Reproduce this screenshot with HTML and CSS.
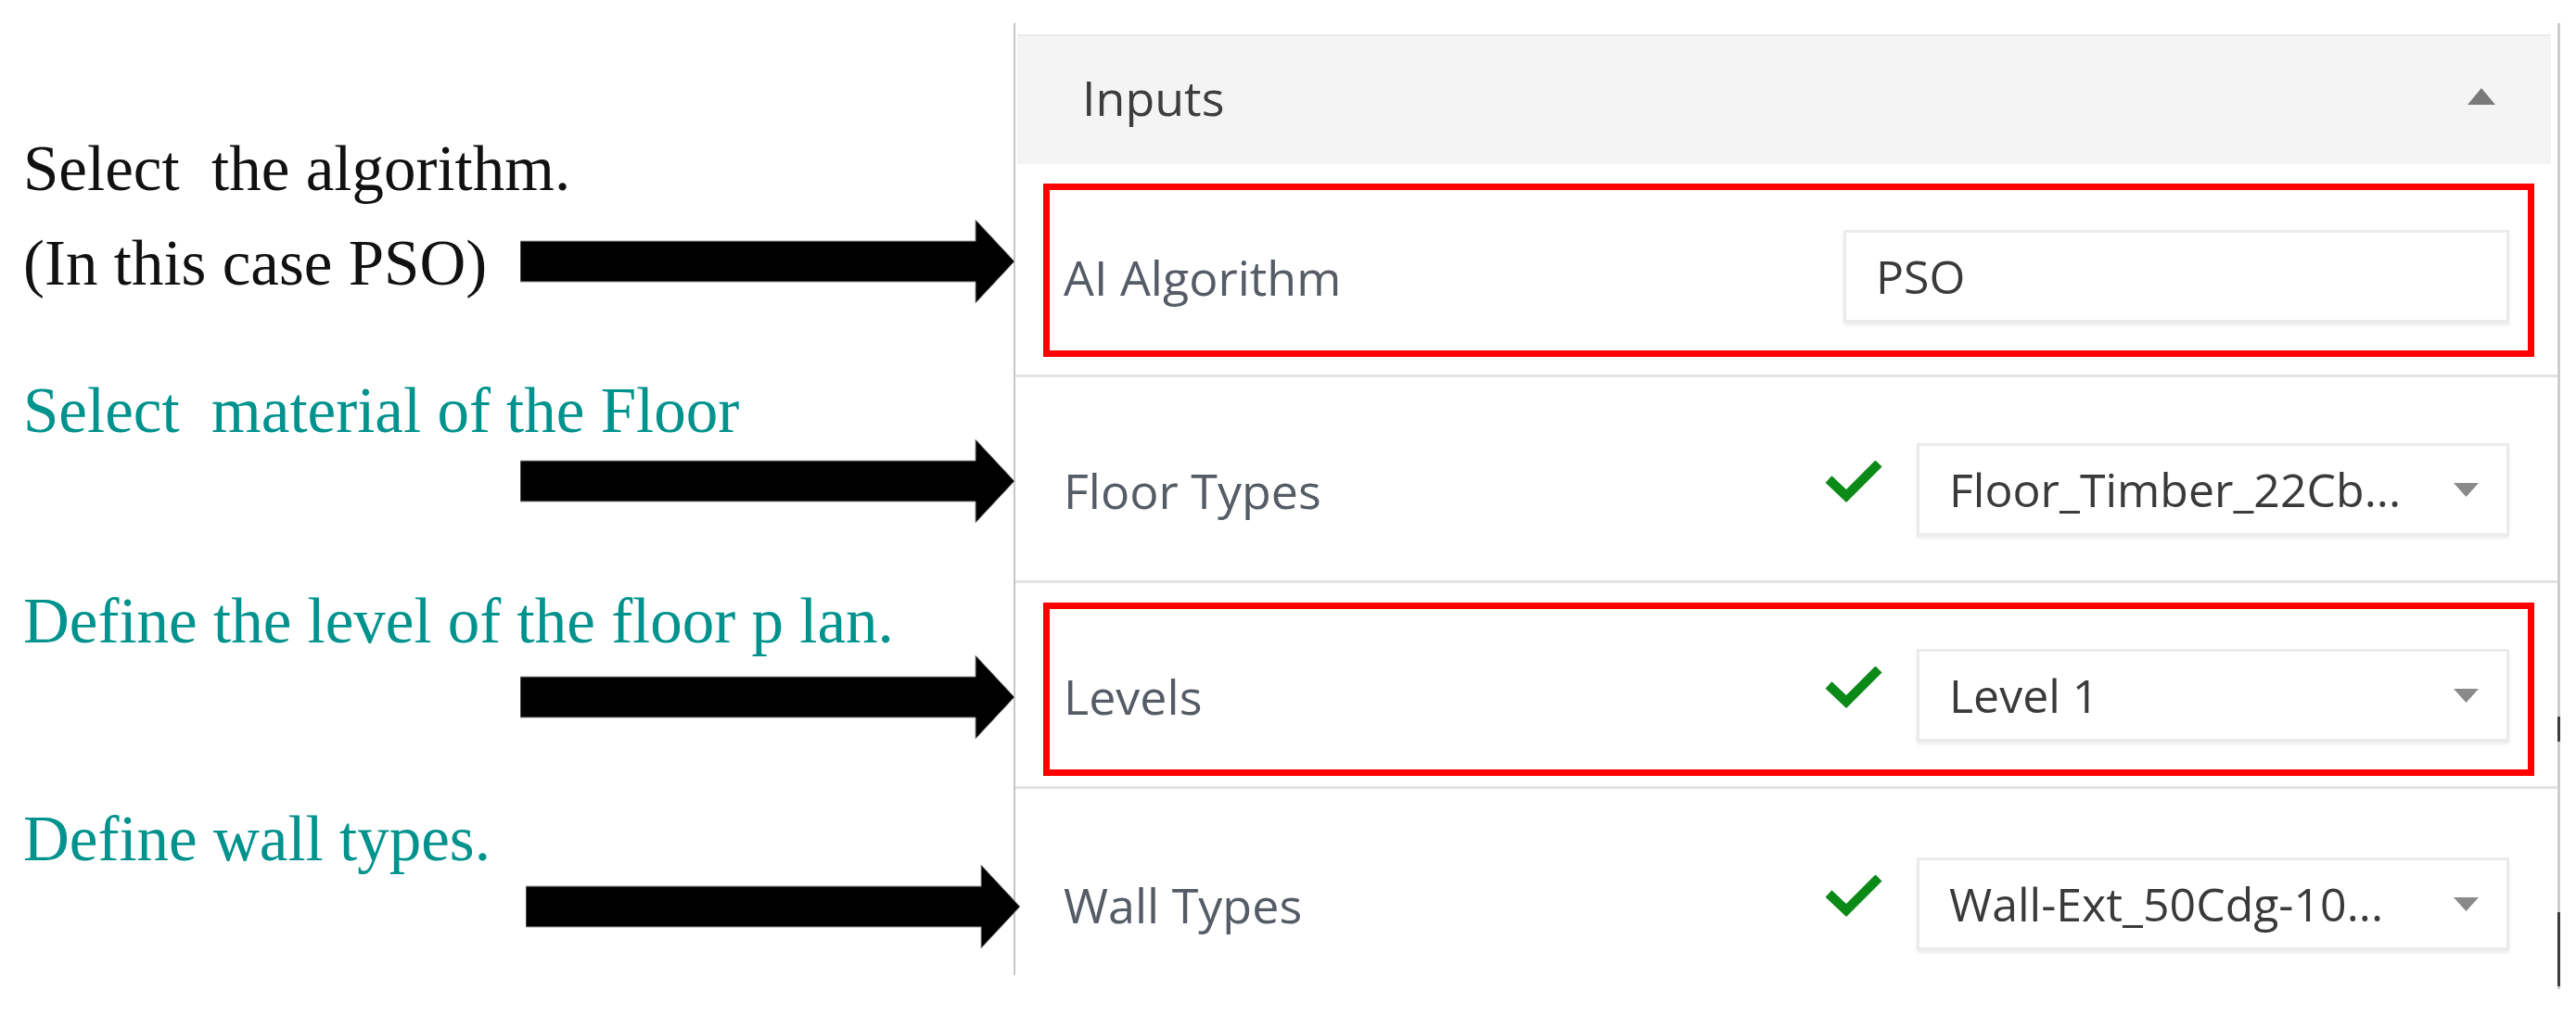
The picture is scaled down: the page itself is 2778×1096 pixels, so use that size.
FILE: index.html
```html
<!DOCTYPE html>
<html>
<head>
<meta charset="utf-8">
<link rel="stylesheet" href="styles.css">
</head>
<body>
<div class="page">
  <div class="notes">
    <div class="note-line black">Select&nbsp; the algorithm.</div>
    <div class="note-row">
      <span class="note-line black">(In this case PSO)</span>
      <svg class="arrow" viewBox="0 0 533 90"><polygon points="0,23 491,23 491,0 533,45 491,90 491,67 0,67"/></svg>
    </div>
    <div class="note-line teal gap-2">Select&nbsp; material of the Floor</div>
    <div class="arrow-row">
      <svg class="arrow" viewBox="0 0 533 90"><polygon points="0,23 491,23 491,0 533,45 491,90 491,67 0,67"/></svg>
    </div>
    <div class="note-line teal gap-3">Define the level of the floor p lan.</div>
    <div class="arrow-row gap-3a">
      <svg class="arrow" viewBox="0 0 533 90"><polygon points="0,23 491,23 491,0 533,45 491,90 491,67 0,67"/></svg>
    </div>
    <div class="note-line teal gap-4">Define wall types.</div>
    <div class="arrow-row gap-4a">
      <svg class="arrow arrow-long" viewBox="0 0 533 90"><polygon points="0,23 491,23 491,0 533,45 491,90 491,67 0,67"/></svg>
    </div>
  </div>

  <div class="panel">
    <div class="panel-header">
      <span>Inputs</span>
      <svg class="caret-up" viewBox="0 0 30 18"><polygon points="0,18 15,0 30,18"/></svg>
    </div>

    <div class="row r1">
      <div class="field hl">
        <span class="label">AI Algorithm</span>
        <div class="control input">PSO</div>
      </div>
    </div>

    <div class="row r2">
      <div class="field">
        <span class="label">Floor Types</span>
        <svg class="check" viewBox="0 0 64 46"><path d="M5 20 L24 38 L59 3"/></svg>
        <div class="control select"><span>Floor_Timber_22Cb...</span><svg class="caret-down" viewBox="0 0 27 15"><polygon points="0,0 27,0 13.5,15"/></svg></div>
      </div>
    </div>

    <div class="row r3">
      <div class="field hl">
        <span class="label">Levels</span>
        <svg class="check" viewBox="0 0 64 46"><path d="M5 20 L24 38 L59 3"/></svg>
        <div class="control select"><span>Level 1</span><svg class="caret-down" viewBox="0 0 27 15"><polygon points="0,0 27,0 13.5,15"/></svg></div>
      </div>
    </div>

    <div class="row r4">
      <div class="field">
        <span class="label">Wall Types</span>
        <svg class="check" viewBox="0 0 64 46"><path d="M5 20 L24 38 L59 3"/></svg>
        <div class="control select"><span>Wall-Ext_50Cdg-10...</span><svg class="caret-down" viewBox="0 0 27 15"><polygon points="0,0 27,0 13.5,15"/></svg></div>
      </div>
    </div>
  </div>

  <div class="rail">
    <div class="thumb t1"></div>
    <div class="thumb t2"></div>
  </div>
</div>
</body>
</html>
```
FILE: styles.css
```css
body {
  margin: 0;
  background: #ffffff;
}

.page {
  display: flex;
  align-items: flex-start;
}

/* Left annotation column */
.notes {
  width: 1093px;
  flex: none;
  box-sizing: border-box;
  padding-top: 151px;
  padding-left: 25px;
  font-family: "Liberation Serif", "Times New Roman", serif;
  font-size: 69px;
  position: relative;
  z-index: 1;
}

.note-line {
  height: 62px;
  line-height: 62px;
  white-space: nowrap;
}

.black { color: #111111; }
.teal { color: #00928d; }

.note-row {
  display: flex;
  justify-content: space-between;
  height: 90px;
  margin-top: 24px;
}

.note-row .note-line {
  margin-top: 16px;
}

.arrow-row {
  display: flex;
  justify-content: flex-end;
  height: 90px;
}

.arrow {
  display: block;
  flex: none;
  width: 533px;
  height: 90px;
  margin-right: -1px;
}

.arrow polygon {
  fill: #000000;
  stroke: #9a9a9a;
  stroke-width: 1;
}

.arrow-long { margin-right: -7px; }

.gap-2 { margin-top: 85px; }
.gap-3 { margin-top: 75px; }
.gap-3a { margin-top: 6px; }
.gap-4 { margin-top: 77px; }
.gap-4a { margin-top: -3px; }

/* Right panel */
.panel {
  width: 1665px;
  height: 1027px;
  flex: none;
  box-sizing: border-box;
  margin-top: 25px;
  border-left: 2px solid #c6c6c6;
  font-family: "Open Sans", "Noto Sans", sans-serif;
}

.panel-header {
  margin: 12px 7px 0 2px;
  height: 140px;
  box-sizing: border-box;
  background: #f4f4f4;
  border-top: 2px solid #ececec;
  display: flex;
  align-items: center;
  justify-content: space-between;
  padding: 0 60px 8px 70px;
  font-size: 52px;
  color: #3d3d3d;
}

.caret-up {
  width: 30px;
  height: 18px;
  fill: #7a7a7a;
}

.row {
  box-sizing: border-box;
  padding: 21px 25px 0 30px;
  border-bottom: 3px solid #e3e3e3;
}

.r1 { height: 230px; }
.r2, .r3 { height: 222px; }
.r4 {
  height: 201px;
  border-bottom: none;
  padding-top: 24px;
}

.field {
  display: flex;
  align-items: center;
  border: 7px solid transparent;
  padding: 43px 20px 30px 15px;
}

.field.hl {
  border-color: #ff0000;
}

.label {
  flex: 1;
  font-size: 52px;
  color: #555c66;
  white-space: nowrap;
}

.check {
  flex: none;
  width: 64px;
  height: 46px;
  margin-right: 36px;
  margin-bottom: 16px;
}

.check path {
  fill: none;
  stroke: #0c8a18;
  stroke-width: 10;
}

.control {
  flex: none;
  height: 100px;
  box-sizing: border-box;
  border: 3px solid #ebebeb;
  box-shadow: 0 3px 3px rgba(0, 0, 0, 0.07);
  background: #ffffff;
  display: flex;
  align-items: center;
  padding: 0 30px 0 32px;
  font-size: 50px;
  color: #3a3a3a;
  white-space: nowrap;
}

.input { width: 718px; }

.select {
  width: 639px;
  justify-content: space-between;
}

.caret-down {
  width: 27px;
  height: 15px;
  fill: #8a8a8a;
}

.rail {
  flex: none;
  width: 3px;
  height: 1042px;
  margin-top: 25px;
  background: #cdcdcd;
}

.thumb { background: #3c3c3c; }
.t1 { margin-top: 748px; height: 27px; }
.t2 { margin-top: 184px; height: 80px; }
```
